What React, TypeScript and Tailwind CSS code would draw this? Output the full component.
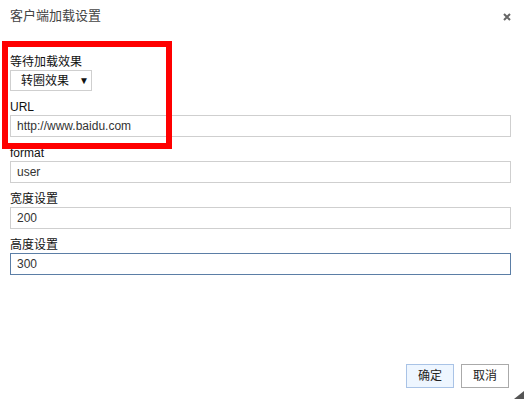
import React from "react";

const font = { fontFamily: '"Liberation Sans", Arial, "Noto Sans CJK SC", sans-serif' };

function Field({ label, value, focused }: { label: string; value: string; focused?: boolean }) {
  return (
    <div className="flex flex-col">
      <div className="h-[15px] leading-[15px] text-[12px] text-[#111]">{label}</div>
      <div
        className={
          "h-[22px] border flex items-center pl-[6px] text-[12px] text-[#333] bg-white " +
          (focused ? "border-[#5b7ea6]" : "border-[#cfcfcf]")
        }
      >
        {value}
      </div>
    </div>
  );
}

export default function App() {
  return (
    <div className="relative w-[524px] h-[399px] bg-white flex flex-col overflow-hidden" style={font}>
      <div className="h-[55px] flex justify-between items-start pl-[10px] pr-[13px] pt-[8px]">
        <div className="text-[13px] leading-[15px] text-[#444]">客户端加载设置</div>
        <svg width="8" height="8" viewBox="0 0 8 8" className="mt-[5px]">
          <path d="M1 1L7 7M7 1L1 7" stroke="#666" strokeWidth="2" />
        </svg>
      </div>
      <div className="flex flex-col px-[10px] w-[521px]">
        <div className="h-[15px] leading-[15px] text-[12px] text-[#111]">等待加载效果</div>
        <div className="w-[82px] h-[21px] border border-[#cfcfcf] flex items-center pl-[10px] text-[12px] text-[#111]">
          <span>转圈效果</span>
          <span className="ml-[10px] text-[10px]">▼</span>
        </div>
        <div className="flex flex-col gap-[9px] mt-[9px]">
          <Field label="URL" value="http://www.baidu.com" />
          <Field label="format" value="user" />
          <Field label="宽度设置" value="200" />
          <Field label="高度设置" value="300" focused />
        </div>
      </div>
      <div className="flex-1" />
      <div className="flex justify-end gap-[7px] pr-[15px] pb-[11px]">
        <button className="w-[48px] h-[24px] border border-[#a9c3e6] bg-[#eef6ff] text-[12px] text-[#222]">确定</button>
        <button className="w-[48px] h-[24px] border border-[#aaaaaa] bg-white text-[12px] text-[#222]">取消</button>
      </div>
      <svg width="10" height="8" viewBox="0 0 10 8" className="absolute right-0 bottom-0">
        <path d="M10 0L10 8L0 8Z" fill="#555" />
      </svg>
      <div className="absolute left-[2px] top-[41px] w-[170px] h-[108px] border-[6px] border-[#ff0000]" />
    </div>
  );
}
